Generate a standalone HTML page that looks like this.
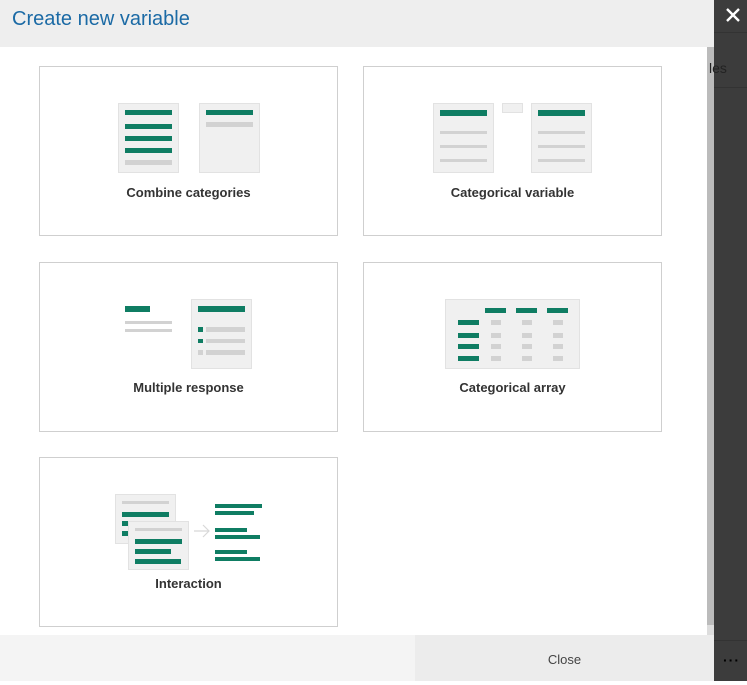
<!DOCTYPE html>
<html><head><style>
body{margin:0;width:747px;height:681px;position:relative;overflow:hidden;font-family:"Liberation Sans",sans-serif;background:#fff}
.a{position:absolute}
.hdr{left:0;top:0;width:714px;height:47px;background:#eeeeee}
.title{left:12px;top:8px;font-size:20px;color:#1b6aa5}
.card{position:absolute;width:297px;height:168px;border:1px solid #cfcfcf;background:#fff}
.lbl{position:absolute;left:0;width:100%;text-align:center;font-weight:bold;font-size:13px;color:#333}
.g{position:absolute;background:#0f7d63}
.s{position:absolute;background:#d2d2d2}
.b{position:absolute;background:#f0f0f0;border:1px solid #e2e2e2;box-sizing:border-box}
</style></head><body>
<div class="a hdr"></div>
<div class="a title">Create new variable</div>
<div class="a" style="left:714px;top:0;width:33px;height:681px;background:#3c3c3c"></div>
<div class="a" style="left:714px;top:32px;width:33px;height:1px;background:#333"></div>
<div class="a" style="left:714px;top:87px;width:33px;height:1px;background:#333"></div>
<div class="a" style="left:714px;top:640px;width:33px;height:1px;background:#333"></div>
<div class="a" style="left:707px;top:47px;width:7px;height:578px;background:#bbb"></div>
<div class="a" style="left:707px;top:625px;width:7px;height:10px;background:#ddd"></div>
<div class="a" style="left:709px;top:60px;font-size:14px;color:#222">les</div>
<svg class="a" style="left:725px;top:7px" width="16" height="16"><path d="M2 2L14 14M14 2L2 14" stroke="#fff" stroke-width="2.4"/></svg>
<div class="a" style="left:723px;top:652px;font-size:14px;color:#000;letter-spacing:1px;font-weight:bold">···</div>
<div class="a" style="left:0;top:635px;width:415px;height:46px;background:#f4f4f4"></div>
<div class="a" style="left:415px;top:635px;width:299px;height:46px;background:#ececec;text-align:center;line-height:50px;font-size:13px;color:#444">Close</div>

<div class="card" style="left:39px;top:66px"><div class="lbl" style="top:118px">Combine categories</div></div>
<div class="card" style="left:363px;top:66px"><div class="lbl" style="top:118px">Categorical variable</div></div>
<div class="card" style="left:39px;top:262px"><div class="lbl" style="top:117px">Multiple response</div></div>
<div class="card" style="left:363px;top:262px"><div class="lbl" style="top:117px">Categorical array</div></div>
<div class="card" style="left:39px;top:457px"><div class="lbl" style="top:118px">Interaction</div></div>

<div class="b" style="left:118px;top:103px;width:61px;height:70px"></div>
<div class="g" style="left:125px;top:110px;width:47px;height:5px"></div>
<div class="g" style="left:125px;top:124px;width:47px;height:5px"></div>
<div class="g" style="left:125px;top:136px;width:47px;height:5px"></div>
<div class="g" style="left:125px;top:148px;width:47px;height:5px"></div>
<div class="s" style="left:125px;top:160px;width:47px;height:5px"></div>
<div class="b" style="left:199px;top:103px;width:61px;height:70px"></div>
<div class="g" style="left:206px;top:110px;width:47px;height:5px"></div>
<div class="s" style="left:206px;top:122px;width:47px;height:5px"></div>

<div class="b" style="left:433px;top:103px;width:61px;height:70px"></div>
<div class="g" style="left:440px;top:110px;width:47px;height:6px"></div>
<div class="s" style="left:440px;top:131px;width:47px;height:3px"></div>
<div class="s" style="left:440px;top:145px;width:47px;height:3px"></div>
<div class="s" style="left:440px;top:159px;width:47px;height:3px"></div>
<div class="b" style="left:502px;top:103px;width:21px;height:10px"></div>
<div class="b" style="left:531px;top:103px;width:61px;height:70px"></div>
<div class="g" style="left:538px;top:110px;width:47px;height:6px"></div>
<div class="s" style="left:538px;top:131px;width:47px;height:3px"></div>
<div class="s" style="left:538px;top:145px;width:47px;height:3px"></div>
<div class="s" style="left:538px;top:159px;width:47px;height:3px"></div>

<div class="g" style="left:125px;top:306px;width:25px;height:6px"></div>
<div class="s" style="left:125px;top:321px;width:47px;height:3px"></div>
<div class="s" style="left:125px;top:329px;width:47px;height:3px"></div>
<div class="b" style="left:191px;top:299px;width:61px;height:70px"></div>
<div class="g" style="left:198px;top:306px;width:47px;height:6px"></div>
<div class="g" style="left:198px;top:327px;width:5px;height:5px"></div>
<div class="s" style="left:206px;top:327px;width:39px;height:5px"></div>
<div class="g" style="left:198px;top:339px;width:5px;height:4px"></div>
<div class="s" style="left:206px;top:339px;width:39px;height:4px"></div>
<div class="s" style="left:198px;top:350px;width:5px;height:5px"></div>
<div class="s" style="left:206px;top:350px;width:39px;height:5px"></div>

<div class="b" style="left:445px;top:299px;width:135px;height:70px"></div>
<div class="g" style="left:485px;top:308px;width:21px;height:5px"></div>
<div class="g" style="left:516px;top:308px;width:21px;height:5px"></div>
<div class="g" style="left:547px;top:308px;width:21px;height:5px"></div>
<div class="g" style="left:458px;top:320px;width:21px;height:5px"></div>
<div class="g" style="left:458px;top:333px;width:21px;height:5px"></div>
<div class="g" style="left:458px;top:344px;width:21px;height:5px"></div>
<div class="g" style="left:458px;top:356px;width:21px;height:5px"></div>
<div class="s" style="left:491px;top:320px;width:10px;height:5px"></div><div class="s" style="left:522px;top:320px;width:10px;height:5px"></div><div class="s" style="left:553px;top:320px;width:10px;height:5px"></div>
<div class="s" style="left:491px;top:333px;width:10px;height:5px"></div><div class="s" style="left:522px;top:333px;width:10px;height:5px"></div><div class="s" style="left:553px;top:333px;width:10px;height:5px"></div>
<div class="s" style="left:491px;top:344px;width:10px;height:5px"></div><div class="s" style="left:522px;top:344px;width:10px;height:5px"></div><div class="s" style="left:553px;top:344px;width:10px;height:5px"></div>
<div class="s" style="left:491px;top:356px;width:10px;height:5px"></div><div class="s" style="left:522px;top:356px;width:10px;height:5px"></div><div class="s" style="left:553px;top:356px;width:10px;height:5px"></div>

<div class="b" style="left:115px;top:494px;width:61px;height:50px"></div>
<div class="s" style="left:122px;top:501px;width:47px;height:3px"></div>
<div class="g" style="left:122px;top:512px;width:47px;height:5px"></div>
<div class="g" style="left:122px;top:521px;width:10px;height:5px"></div>
<div class="g" style="left:122px;top:531px;width:10px;height:5px"></div>
<div class="b" style="left:128px;top:521px;width:61px;height:49px"></div>
<div class="s" style="left:135px;top:528px;width:47px;height:3px"></div>
<div class="g" style="left:135px;top:539px;width:47px;height:5px"></div>
<div class="g" style="left:135px;top:549px;width:36px;height:5px"></div>
<div class="g" style="left:135px;top:559px;width:46px;height:5px"></div>
<svg class="a" style="left:193px;top:524px" width="18" height="14"><path d="M1 7H16M10 1L16 7L10 13" stroke="#d8d8d8" stroke-width="1.2" fill="none"/></svg>
<div class="g" style="left:215px;top:504px;width:47px;height:4px"></div>
<div class="g" style="left:215px;top:511px;width:39px;height:4px"></div>
<div class="g" style="left:215px;top:528px;width:32px;height:4px"></div>
<div class="g" style="left:215px;top:535px;width:45px;height:4px"></div>
<div class="g" style="left:215px;top:550px;width:32px;height:4px"></div>
<div class="g" style="left:215px;top:557px;width:45px;height:4px"></div>
</body></html>
